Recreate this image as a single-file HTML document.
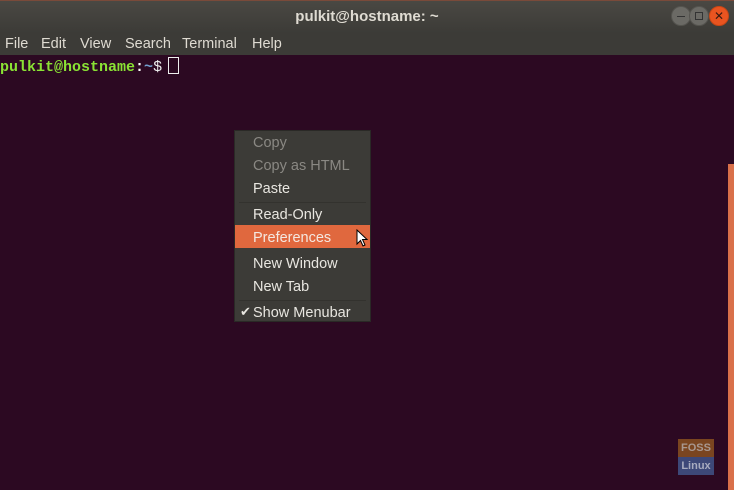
<!DOCTYPE html>
<html><head><meta charset="utf-8"><style>
*{margin:0;padding:0;box-sizing:border-box}
body{width:734px;height:490px;overflow:hidden;background:#2c0922;font-family:"Liberation Sans","DejaVu Sans",sans-serif;position:relative}
.title{position:absolute;left:0;top:0;width:734px;height:33px;background:linear-gradient(#4a4843,#3c3b37);border-top:1px solid #7a4a3a;color:#dfdbd2;font-weight:bold;font-size:15px;text-align:center;line-height:31px}
.mb{position:absolute;top:33px;left:0;width:734px;height:22px;background:#3c3b37;color:#dfdbd2;font-size:14.5px;line-height:22px}
.mb span{position:absolute;top:0}
.btn{position:absolute;top:6px;width:20px;height:20px;border-radius:50%;background:#6b6a65;border:1px solid #55544f}
.term{position:absolute;top:57px;left:0;font-family:"Liberation Mono","DejaVu Sans Mono",monospace;font-size:15px;font-weight:bold;color:#8ae234}
.cur{display:inline-block;width:11px;height:17px;border:1.5px solid #eee;vertical-align:-3px;margin-left:6px}
.menu{position:absolute;left:234px;top:130px;width:137px;height:192px;background:#3c3b37;border:1px solid #2a2926;font-size:14.5px;color:#e8e6e0}
.it{position:absolute;left:18px}
.dis{color:#8a8883}
.sep{position:absolute;left:4px;right:4px;height:1px;background:#33322e}
.hl{position:absolute;left:0;right:0;top:94px;height:23px;background:#e0683e}
.bar{position:absolute;left:728px;top:164px;width:6px;height:326px;background:#d9704a}
</style></head><body>
<div class="title">pulkit@hostname: ~</div>
<div class="btn" style="left:671px"><div style="position:absolute;left:5px;top:9px;width:8px;height:1px;background:#333"></div></div>
<div class="btn" style="left:689px"><div style="position:absolute;left:5px;top:5px;width:8px;height:8px;border:1px solid #333"></div></div>
<div class="btn" style="left:709px;background:#e95420;border-color:#c84615;color:#3a1a10;font-size:12px;line-height:18px;text-align:center">✕</div>
<div class="mb"><span style="left:5px">File</span><span style="left:41px">Edit</span><span style="left:80px">View</span><span style="left:125px">Search</span><span style="left:182px">Terminal</span><span style="left:252px">Help</span></div>
<div class="term">pulkit@hostname<span style="color:#fff">:</span><span style="color:#729fcf">~</span><span style="color:#eee;font-weight:normal">$</span><span class="cur"></span></div>
<div class="menu">
<div class="it dis" style="top:4px">Copy</div>
<div class="it dis" style="top:27px">Copy as HTML</div>
<div class="it" style="top:50px">Paste</div>
<div class="sep" style="top:71px"></div>
<div class="it" style="top:76px">Read-Only</div>
<div class="hl"></div>
<div class="it" style="top:99px;color:#f4e8e0">Preferences</div>
<div class="it" style="top:125px">New Window</div>
<div class="it" style="top:148px">New Tab</div>
<div class="sep" style="top:169px"></div>
<div class="it" style="top:174px">Show Menubar</div>
<div style="position:absolute;left:5px;top:173px;font-size:13px">✔</div>
<svg style="position:absolute;left:121px;top:98px" width="14" height="20" viewBox="0 0 14 20"><path d="M1 1 L1 15 L4.5 11.5 L7 17 L9 16 L6.5 10.5 L11 10.5 Z" fill="#fff" stroke="#000" stroke-width="1"/></svg>
</div>
<div class="bar"></div>
<div style="position:absolute;left:678px;top:439px;width:36px;height:18px;background:#7a4520;color:#a89890;font-size:11px;font-weight:bold;text-align:center;line-height:18px">FOSS</div>
<div style="position:absolute;left:678px;top:457px;width:36px;height:18px;background:#3d4878;color:#a8acc0;font-size:11px;font-weight:bold;text-align:center;line-height:18px">Linux</div>
</body></html>
